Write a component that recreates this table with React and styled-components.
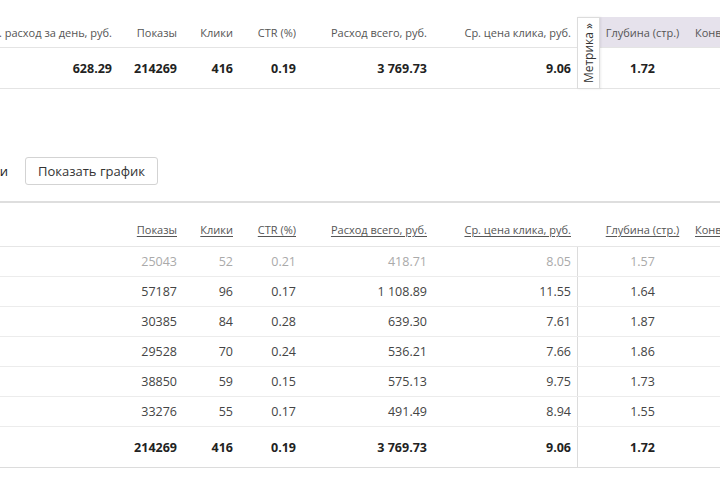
import React from "react";
import styled, { createGlobalStyle } from "styled-components";

const GlobalStyle = createGlobalStyle`
  html, body {
    margin: 0;
    padding: 0;
    background: #fff;
    overflow: hidden;
  }
  body {
    width: 720px;
    height: 480px;
    font-family: "Open Sans", "DejaVu Sans", sans-serif;
    color: #333;
  }
`;

const COLS = "172px 65px 56px 63px 131px 150px 23px 85px 220px";

const topData = {
  headers: ["Ср. расход за день, руб.", "Показы", "Клики", "CTR (%)", "Расход всего, руб.", "Ср. цена клика, руб."],
  values: ["628.29", "214269", "416", "0.19", "3 769.73", "9.06"],
  depth: "1.72",
};

const rows = [
  { v: ["25043", "52", "0.21", "418.71", "8.05"], depth: "1.57", dim: true },
  { v: ["57187", "96", "0.17", "1 108.89", "11.55"], depth: "1.64" },
  { v: ["30385", "84", "0.28", "639.30", "7.61"], depth: "1.87" },
  { v: ["29528", "70", "0.24", "536.21", "7.66"], depth: "1.86" },
  { v: ["38850", "59", "0.15", "575.13", "9.75"], depth: "1.73" },
  { v: ["33276", "55", "0.17", "491.49", "8.94"], depth: "1.55" },
];
const total = { v: ["214269", "416", "0.19", "3 769.73", "9.06"], depth: "1.72" };

function App() {
  return (
    <>
      <GlobalStyle />
      <Page>
        <TopTable>
          {topData.headers.map((h, i) => (
            <HeadCell key={h} $last={i === 5}>{h}</HeadCell>
          ))}
          <MetrikaTab>
            <MetrikaLabel>Метрика »</MetrikaLabel>
          </MetrikaTab>
          <HeadCell $metrika $center>Глубина (стр.)</HeadCell>
          <HeadCell $metrika $left>Конверсия (%)</HeadCell>
          {topData.values.map((v, i) => (
            <ValueCell key={i} $last={i === 5}>{v}</ValueCell>
          ))}
          <ValueCell $center>{topData.depth}</ValueCell>
          <ValueCell />
        </TopTable>

        <Toolbar>
          <ToolbarLabel>Группировки</ToolbarLabel>
          <Button>Показать график</Button>
        </Toolbar>

        <BottomTable>
          <HeadRow>
            <Cell />
            {["Показы", "Клики", "CTR (%)", "Расход всего, руб.", "Ср. цена клика, руб."].map((h, i) => (
              <Cell key={h} $last={i === 4}><Link>{h}</Link></Cell>
            ))}
            <Cell />
            <Cell $center><Link>Глубина (стр.)</Link></Cell>
            <Cell $left><Link>Конверсия (%)</Link></Cell>
          </HeadRow>
          {rows.map((r, idx) => (
            <DataRow key={idx} $dim={r.dim}>
              <Cell />
              {r.v.map((v, i) => (
                <Cell key={i} $last={i === 4}>{v}</Cell>
              ))}
              <Divider />
              <Cell $center>{r.depth}</Cell>
              <Cell />
            </DataRow>
          ))}
          <DataRow $total>
            <Cell />
            {total.v.map((v, i) => (
              <Cell key={i} $last={i === 4}>{v}</Cell>
            ))}
            <Divider />
            <Cell $center>{total.depth}</Cell>
            <Cell />
          </DataRow>
        </BottomTable>
      </Page>
    </>
  );
}

const Page = styled.div`
  width: 900px;
  margin-left: -60px;
  padding-top: 17px;
`;

const TopTable = styled.div`
  display: grid;
  grid-template-columns: ${COLS};
  grid-template-rows: 31px 41px;
`;

const HeadCell = styled.div`
  display: flex;
  align-items: center;
  justify-content: ${(p) => (p.$center ? "center" : p.$left ? "flex-start" : "flex-end")};
  padding: ${(p) => (p.$left ? "0 0 0 10px" : p.$last ? "0 6px 0 0" : "0")};
  font-size: 11px;
  color: #555;
  white-space: nowrap;
  border-bottom: 1px solid #e4e4e4;
  background: ${(p) => (p.$metrika ? "#e6e2ec" : "#fff")};
`;

const ValueCell = styled.div`
  display: flex;
  align-items: center;
  justify-content: ${(p) => (p.$center ? "center" : "flex-end")};
  padding-right: ${(p) => (p.$last ? "6px" : "0")};
  font-size: 12.5px;
  font-weight: 700;
  color: #222;
  border-bottom: 1px solid #e4e4e4;
`;

const MetrikaTab = styled.div`
  grid-column: 7;
  grid-row: 1 / span 2;
  display: flex;
  align-items: center;
  justify-content: center;
  background: #fff;
  border: 1px solid #dcdcdc;
  box-shadow: 1px 0 2px rgba(0, 0, 0, 0.08);
  box-sizing: border-box;
  position: relative;
  z-index: 1;
`;

const MetrikaLabel = styled.span`
  writing-mode: vertical-rl;
  transform: rotate(180deg);
  font-size: 12px;
  color: #333;
  white-space: nowrap;
`;

const Toolbar = styled.div`
  display: flex;
  align-items: center;
  gap: 17px;
  margin-top: 68px;
  height: 28px;
`;

const ToolbarLabel = styled.div`
  width: 68px;
  display: flex;
  justify-content: flex-end;
  white-space: nowrap;
  font-size: 13px;
  color: #222;
`;

const Button = styled.button`
  height: 28px;
  width: 133px;
  padding: 0;
  border: 1px solid #d3d3d3;
  border-radius: 3px;
  background: #fff;
  font-family: "Open Sans", "DejaVu Sans", sans-serif;
  font-size: 13px;
  color: #333;
`;

const BottomTable = styled.div`
  margin-top: 16px;
  border-top: 2px solid #dedede;
  border-bottom: 1px solid #dcdcdc;
`;

const HeadRow = styled.div`
  display: grid;
  grid-template-columns: ${COLS};
  height: 44px;
  align-items: end;
  padding-bottom: 9px;
  box-sizing: border-box;
  border-bottom: 1px solid #e6e6e6;
  font-size: 11px;
`;

const DataRow = styled.div`
  display: grid;
  grid-template-columns: ${COLS};
  height: ${(p) => (p.$total ? "40px" : "30px")};
  align-items: center;
  border-bottom: ${(p) => (p.$total ? "none" : "1px solid #ececec")};
  box-sizing: border-box;
  font-size: 12.5px;
  font-weight: ${(p) => (p.$total ? 700 : 400)};
  color: ${(p) => (p.$dim ? "#aaa" : p.$total ? "#222" : "#444")};
`;

const Cell = styled.div`
  display: flex;
  justify-content: ${(p) => (p.$center ? "center" : p.$left ? "flex-start" : "flex-end")};
  padding: ${(p) => (p.$left ? "0 0 0 10px" : p.$last ? "0 6px 0 0" : "0")};
  white-space: nowrap;
`;

const Divider = styled.div`
  align-self: stretch;
  border-left: 1px solid #dcdcdc;
`;

const Link = styled.span`
  color: #555;
  text-decoration: underline;
  text-underline-offset: 2px;
`;

export default App;
